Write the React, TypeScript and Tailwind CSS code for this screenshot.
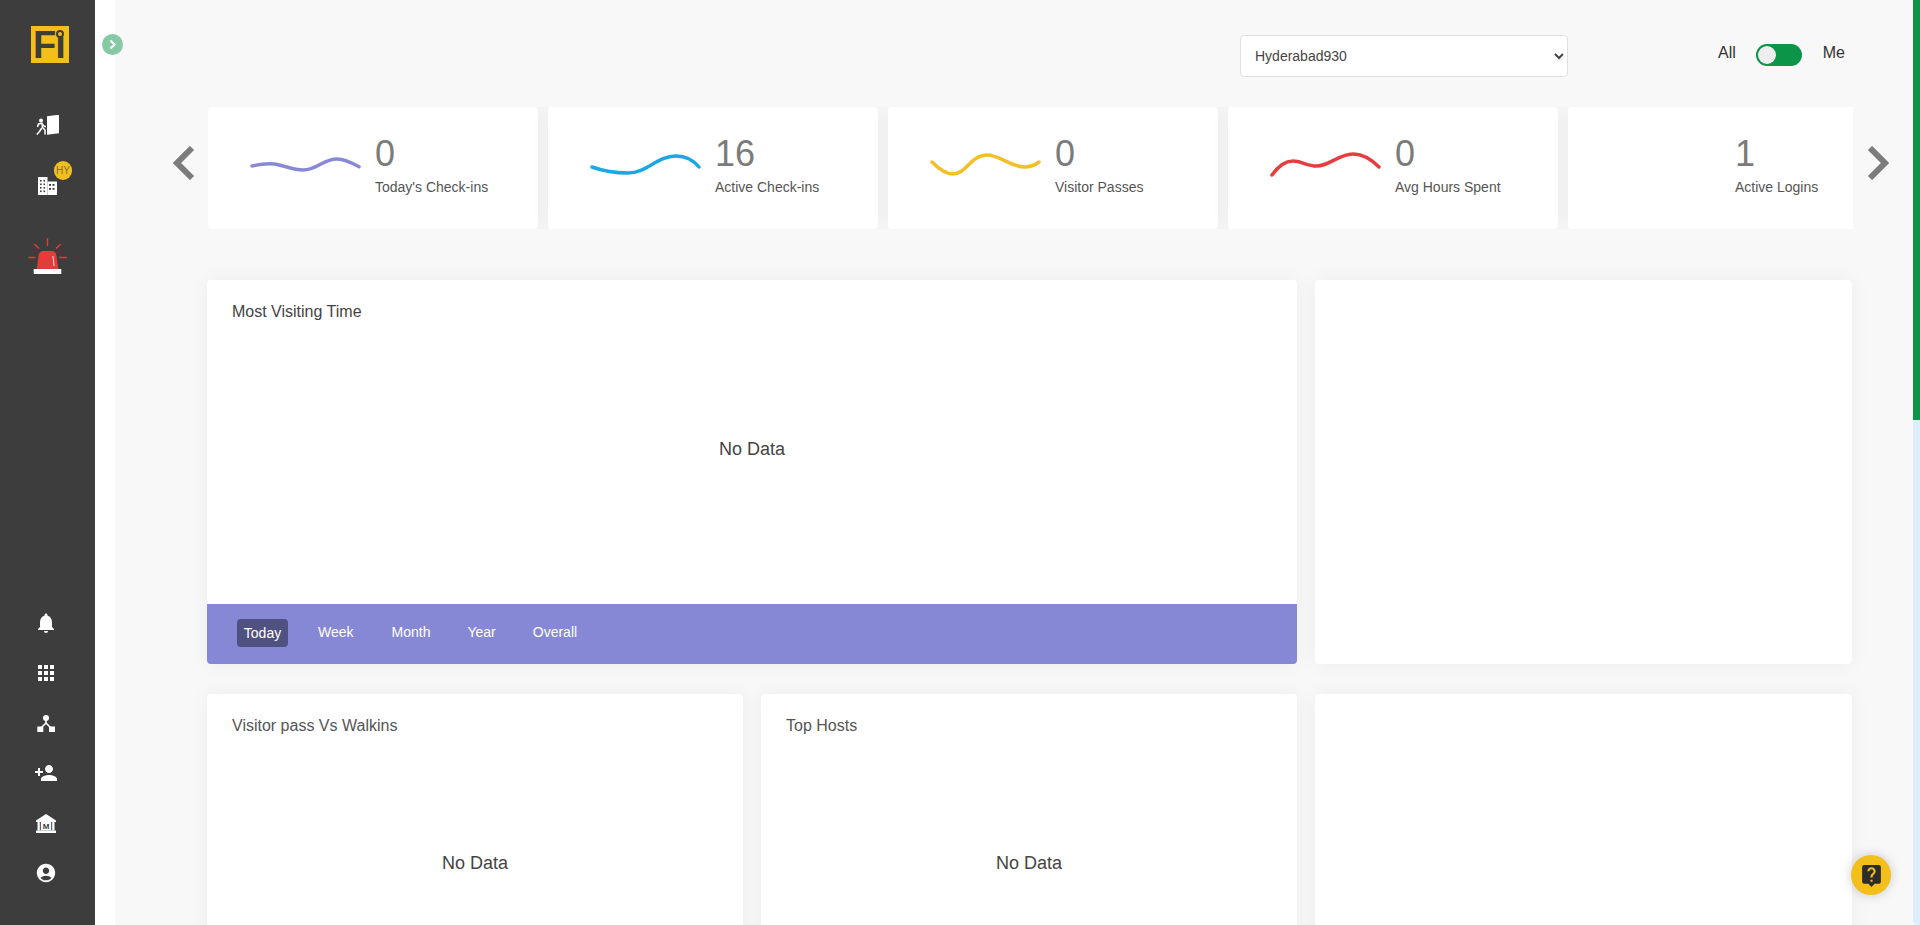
import { MdNotifications, MdApps, MdPersonAdd, MdAccountCircle, MdLiveHelp } from 'react-icons/md';

const stats = [
  { value: '0', label: "Today's Check-ins", color: '#8889d6', wave: 'M7 16C14 14.5 21 13 29 14C38 15 48 20 58 20C72 20 78 9 92 9C100 9 107 13 114 16.7' },
  { value: '16', label: 'Active Check-ins', color: '#1ba8e0', wave: 'M7 17C18 21 30 23 43 23C62 23 72 6 91 6C101 6 109 11 114 17' },
  { value: '0', label: 'Visitor Passes', color: '#f2bf2a', wave: 'M7 12C13 18 20 24 28 24C41 24 46 5 62 5C75 5 85 17 100 17C106 17 110 15 114 12' },
  { value: '0', label: 'Avg Hours Spent', color: '#e63e3e', wave: 'M7 25C12 18 19 11 28 11C36 11 42 16 52 16C64 16 74 4 88 4C98 4 107 10 114 17' },
  { value: '1', label: 'Active Logins', color: '', wave: '' },
];

function DoorIcon() {
  return (
    <svg width="24" height="20" viewBox="0 0 24 20" className="text-white">
      <path d="M11 1.5L23 0V18.5L11 20Z" fill="currentColor" transform="translate(0 -0.3)" />
      <rect x="10" y="0.5" width="1" height="19" fill="#3d3d3d" />
      <circle cx="5" cy="5.5" r="2" fill="currentColor" />
      <path d="M1.5 12L2.5 9L6 8.2L6.5 12.5L9 15V19.5M5.8 13L3.5 16.5L0.8 19.5M6.5 9.5L8.5 11.5L10 11.5" stroke="currentColor" strokeWidth="1.5" fill="none" />
    </svg>
  );
}

function BuildingIcon() {
  const holes = [3, 6.5, 10];
  return (
    <svg width="19" height="18" viewBox="0 0 19 18">
      <rect x="0" y="0" width="9.5" height="18" fill="#fff" />
      <rect x="9.5" y="4.5" width="9.5" height="13.5" fill="#fff" />
      {holes.map((y) => (
        <g key={y} fill="#3d3d3d">
          <rect x="2" y={y} width="1.6" height="1.6" />
          <rect x="5.5" y={y} width="1.6" height="1.6" />
        </g>
      ))}
      <rect x="2" y="13.5" width="1.6" height="1.6" fill="#3d3d3d" />
      <rect x="5.5" y="13.5" width="1.6" height="1.6" fill="#3d3d3d" />
      <rect x="11" y="7" width="2" height="1.8" fill="#3d3d3d" />
      <rect x="14.5" y="7" width="2" height="1.8" fill="#3d3d3d" />
      <rect x="11" y="11" width="2" height="1.8" fill="#3d3d3d" />
      <rect x="14.5" y="11" width="2" height="1.8" fill="#3d3d3d" />
    </svg>
  );
}

function SirenIcon() {
  return (
    <svg width="39" height="36" viewBox="0 0 39 36">
      <path d="M8.7 31L10.5 18Q11 13 15.5 13H23.5Q28 13 28.5 18L30.3 31Z" fill="#e63b3b" />
      <rect x="5.7" y="31" width="27.6" height="5" fill="#fff" />
      <path d="M19.5 0V8M6.3 6L11 10.5M32.7 6L28 10.5M0.3 19.5H7.5M31.3 19.5H38.7" stroke="#e63b3b" strokeWidth="1.4" fill="none" />
      <path d="M25 18L26 28" stroke="#fff" strokeWidth="0.8" fill="none" />
    </svg>
  );
}

function NetworkIcon() {
  return (
    <svg width="18" height="17" viewBox="0 0 18 17" className="text-white">
      <circle cx="9" cy="3" r="3" fill="currentColor" />
      <rect x="0.3" y="11.5" width="6" height="5.5" fill="currentColor" />
      <rect x="12" y="11.5" width="6" height="5.5" fill="currentColor" />
      <path d="M9 5V8L4 13M9 8L14 13" stroke="currentColor" strokeWidth="1.6" fill="none" />
    </svg>
  );
}

function BankIcon() {
  return (
    <svg width="20" height="19" viewBox="0 0 20 19">
      <path d="M10 0L20 6.5V8H0V6.5Z" fill="#fff" />
      <rect x="1.5" y="8" width="17" height="8.5" fill="#fff" />
      <rect x="3.8" y="8" width="1" height="8.5" fill="#3d3d3d" />
      <rect x="15.2" y="8" width="1" height="8.5" fill="#3d3d3d" />
      <text x="10" y="15" textAnchor="middle" fontSize="8" fontWeight="700" fontFamily="'Liberation Sans', sans-serif" fill="#3d3d3d">M</text>
      <rect x="0" y="16.5" width="20" height="2.5" fill="#fff" />
    </svg>
  );
}

function Sidebar() {
  return (
    <aside className="w-[95px] shrink-0 h-full bg-[#3d3d3d] flex flex-col items-center">
      <div className="relative mt-[26px] ml-[5px] w-[38px] h-[37px] shrink-0 bg-[#f2bf1b] text-[#3d3d3d] font-bold text-[38px] leading-[37px] tracking-[-1px] pl-[2px] pt-px">
        Fı
        <span className="absolute left-[25px] top-[4px] w-[8px] h-[8px] rounded-full border-2 border-[#3d3d3d]" />
      </div>
      <div className="mt-[52px] h-[20px]"><DoorIcon /></div>
      <div className="relative mt-[42px] h-[18px]">
        <BuildingIcon />
        <span className="absolute left-[16px] top-[-16px] w-[18px] h-[19px] rounded-full bg-[#f2bf1b] text-[#7d7440] text-[10px] leading-[19px] text-center">HY</span>
      </div>
      <div className="mt-[43px] h-[36px]"><SirenIcon /></div>
      <div className="mt-auto mb-[27px] pr-[3px] flex flex-col items-center text-white">
        <div className="h-[50px] flex items-center"><MdNotifications size={24} /></div>
        <div className="h-[50px] flex items-center"><MdApps size={24} /></div>
        <div className="h-[50px] flex items-center"><NetworkIcon /></div>
        <div className="h-[50px] flex items-center"><MdPersonAdd size={24} /></div>
        <div className="h-[50px] flex items-center"><BankIcon /></div>
        <div className="h-[50px] flex items-center"><MdAccountCircle size={22} /></div>
      </div>
    </aside>
  );
}

function StatCard({ value, label, color, wave }: { value: string; label: string; color: string; wave: string }) {
  return (
    <div className="w-[330px] h-[122px] shrink-0 bg-white rounded flex items-start shadow-[0_0_20px_rgba(0,0,0,0.05)]">
      <svg width="120" height="40" viewBox="0 0 120 40" className="ml-[37px] mt-[43px] shrink-0">
        {wave && <path d={wave} stroke={color} strokeWidth="3.5" strokeLinecap="round" fill="none" />}
      </svg>
      <div className="ml-[10px] pt-[29px]">
        <div className="text-[36px] leading-[36px] text-[#7b7b7b]">{value}</div>
        <div className="mt-[5px] text-[14px] leading-[20px] text-[#555]">{label}</div>
      </div>
    </div>
  );
}

function Arrow({ flip }: { flip?: boolean }) {
  return (
    <svg width="22" height="34" viewBox="0 0 22 34" className="shrink-0 mb-[10px]">
      <path d={flip ? 'M3 2L18 17L3 32' : 'M19 2L4 17L19 32'} stroke="#7c7c7c" strokeWidth="6" fill="none" />
    </svg>
  );
}

function ChartCard({ title, tall }: { title: string; tall?: boolean }) {
  return (
    <div className={`h-[384px] bg-white rounded shadow-[0_0_20px_rgba(0,0,0,0.05)] flex flex-col ${tall ? 'col-span-2' : ''}`}>
      <div className={`pl-[25px] pt-[20px] text-[16px] leading-[24px] ${tall ? 'text-[#444]' : 'text-[#555]'}`}>{title}</div>
      <div className="mt-[112px] text-center text-[18px] leading-[26px] text-[#444]">No Data</div>
      {tall && (
        <div className="mt-auto h-[60px] shrink-0 bg-[#8688d5] rounded-b flex items-center pl-[30px] pb-[3px] gap-[22px] text-white text-[14px]">
          <span className="bg-[#4f5180] rounded w-[51px] h-[28px] leading-[28px] text-center">Today</span>
          <span className="px-[8px]">Week</span>
          <span className="px-[8px]">Month</span>
          <span className="px-[8px] -ml-px">Year</span>
          <span className="px-[7px]">Overall</span>
        </div>
      )}
    </div>
  );
}

export default function App() {
  return (
    <div className="relative flex h-[925px] overflow-hidden bg-white font-['Liberation_Sans',Arial,sans-serif]">
      <Sidebar />
      <div className="w-[20px] shrink-0 bg-white" />
      <main className="flex-1 min-w-0 h-full bg-[#f8f8f8] overflow-hidden">
        <div className="pt-[35px] pr-[68px] flex justify-end items-start">
          <select defaultValue="Hyderabad930" className="w-[328px] h-[42px] bg-white border border-[#dfdfdf] rounded px-[10px] text-[14px] text-[#444]">
            <option>Hyderabad930</option>
          </select>
          <div className="ml-[150px] mt-[6px] flex items-center text-[16px] text-[#333]">
            <span className="mb-[4px]">All</span>
            <span className="ml-[20px] w-[46px] h-[22px] rounded-full bg-[#0c9449] flex items-center pl-[2px]">
              <span className="w-[18px] h-[18px] rounded-full bg-[#eee]" />
            </span>
            <span className="ml-[21px] mb-[4px]">Me</span>
          </div>
        </div>

        <div className="mt-[30px] pl-[58px] flex items-center">
          <Arrow />
          <div className="ml-[13px] w-[1645px] shrink-0 flex gap-[10px] overflow-hidden">
            {stats.map((s) => (
              <StatCard key={s.label} {...s} />
            ))}
          </div>
          <div className="ml-[14px]"><Arrow flip /></div>
        </div>

        <div className="mt-[51px] ml-[92px] w-[1645px] grid grid-cols-[536px_536px_537px] gap-x-[18px] gap-y-[30px]">
          <ChartCard title="Most Visiting Time" tall />
          <div className="h-[384px] bg-white rounded shadow-[0_0_20px_rgba(0,0,0,0.05)]" />
          <ChartCard title="Visitor pass Vs Walkins" />
          <ChartCard title="Top Hosts" />
          <div className="h-[384px] bg-white rounded shadow-[0_0_20px_rgba(0,0,0,0.05)]" />
        </div>
      </main>

      <div className="w-[7px] shrink-0 h-full bg-[#dcedfb] rounded-bl">
        <div className="h-[420px] bg-[#0c9449]" />
      </div>

      <button className="absolute left-[1851px] top-[855px] w-[40px] h-[40px] rounded-full bg-[#f2bf1b] flex items-center justify-center text-[#2d2d2d] shadow-[0_0_12px_rgba(0,0,0,0.2)]">
        <MdLiveHelp size={25} />
      </button>

      <button className="absolute left-[102px] top-[34px] w-[21px] h-[21px] rounded-full bg-[#85c9a5] flex items-center justify-center">
        <svg width="9" height="11" viewBox="0 0 9 11"><path d="M2.5 1.5L6.5 5.5L2.5 9.5" stroke="#fff" strokeWidth="2" fill="none" /></svg>
      </button>
    </div>
  );
}
